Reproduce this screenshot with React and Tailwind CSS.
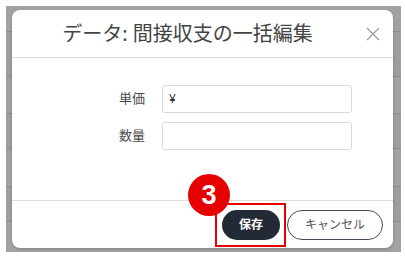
import React from "react";

const rows = [
  { h: 25, bg: "bg-[#a2a2a2]" },
  { h: 45, bg: "bg-[#9e9e9e]" },
  { h: 37, bg: "bg-[#a2a2a2]" },
  { h: 35, bg: "bg-[#9e9e9e]" },
  { h: 38, bg: "bg-[#a2a2a2]" },
  { h: 35, bg: "bg-[#9e9e9e]" },
  { h: 31, bg: "bg-[#a2a2a2]" },
];

function Backdrop() {
  return (
    <div className="ml-[6px] mt-[6px] flex h-[246px] w-[395px] flex-col overflow-hidden bg-[#a0a0a0]">
      {rows.map((r, i) => (
        <div
          key={i}
          className={`${r.bg} shrink-0 ${i > 0 ? "border-t border-[#8c8c8c]" : ""}`}
          style={{ height: r.h }}
        />
      ))}
    </div>
  );
}

function Field({ label, prefix }) {
  return (
    <div className="flex items-center">
      <label className="w-[133px] text-right text-[13px] text-[#4a4a4a]">{label}</label>
      <div className="ml-[17px] flex h-[28px] w-[190px] items-center rounded-[3px] border border-[#d9d9d9] bg-white px-[6px] text-[12px] text-[#333]">
        {prefix}
      </div>
    </div>
  );
}

export default function App() {
  return (
    <div
      className="relative h-[258px] w-[405px] overflow-hidden bg-white"
      style={{ fontFamily: '"Noto Sans", "Noto Sans CJK JP", sans-serif' }}
    >
      <Backdrop />

      <div className="absolute left-[12px] top-[10px] flex h-[238px] w-[381px] flex-col rounded-[8px] bg-white shadow-[0_1px_3px_rgba(0,0,0,0.2)]">
        <div className="flex h-[48px] shrink-0 items-center border-b border-[#dcdcdc]">
          <h2 className="flex-1 pt-[1px] text-center text-[20px] font-normal text-[#444]">
            データ: 間接収支の一括編集
          </h2>
          <button className="mr-[10px] flex h-[20px] w-[20px] items-center justify-center text-[#9a9a9a]">
            <svg width="14" height="14" viewBox="0 0 14 14" fill="none" stroke="currentColor" strokeWidth="1.2">
              <path d="M1 1 L13 13 M13 1 L1 13" />
            </svg>
          </button>
        </div>

        <div className="flex flex-1 flex-col gap-[9px] pt-[27px]">
          <Field label="単価" prefix="¥" />
          <Field label="数量" prefix="" />
        </div>

        <div className="relative flex h-[48px] shrink-0 items-center justify-end gap-[7px] border-t border-[#dcdcdc] pr-[10px]">
          <button className="h-[30px] w-[58px] rounded-full bg-[#222a36] text-[12px] font-bold text-white">
            保存
          </button>
          <button className="h-[30px] w-[96px] rounded-full border border-[#444c58] bg-white text-[12px] text-[#555]">
            キャンセル
          </button>

          <div className="absolute left-[203px] top-[2px] h-[44px] w-[71px] border-2 border-[#e60000]" />
          <div
            className="absolute left-[176px] top-[-27px] flex h-[42px] w-[42px] items-center justify-center rounded-full bg-[#e60000] text-[27px] font-bold leading-none text-white"
            style={{ fontFamily: '"Liberation Sans", Arial, sans-serif' }}
          >
            3
          </div>
        </div>
      </div>
    </div>
  );
}
